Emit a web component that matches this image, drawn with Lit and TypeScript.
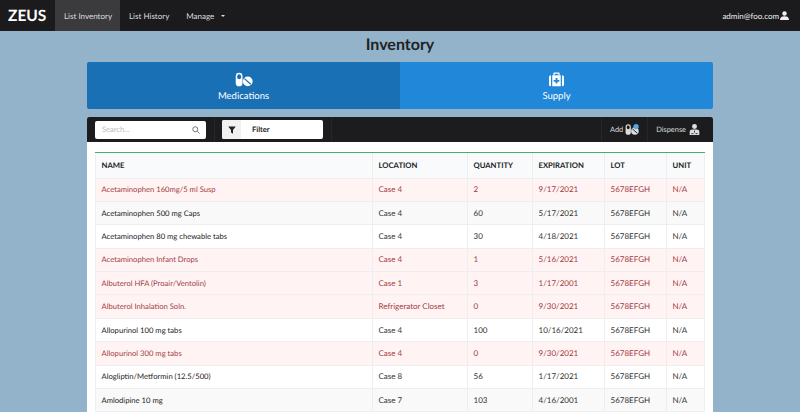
import { LitElement, css, html, svg } from 'lit'
import { customElement } from 'lit/decorators.js'
import { classMap } from 'lit/directives/class-map.js'

type Row = [string, string, string, string, boolean]

const ROWS: Row[] = [
  ['Acetaminophen 160mg/5 ml Susp', 'Case 4', '2', '9/17/2021', true],
  ['Acetaminophen 500 mg Caps', 'Case 4', '60', '5/17/2021', false],
  ['Acetaminophen 80 mg chewable tabs', 'Case 4', '30', '4/18/2021', false],
  ['Acetaminophen Infant Drops', 'Case 4', '1', '5/16/2021', true],
  ['Albuterol HFA (Proair/Ventolin)', 'Case 1', '3', '1/17/2001', true],
  ['Albuterol Inhalation Soln.', 'Refrigerator Closet', '0', '9/30/2021', true],
  ['Allopurinol 100 mg tabs', 'Case 4', '100', '10/16/2021', false],
  ['Allopurinol 300 mg tabs', 'Case 4', '0', '9/30/2021', true],
  ['Alogliptin/Metformin (12.5/500)', 'Case 8', '56', '1/17/2021', false],
  ['Amlodipine 10 mg', 'Case 7', '103', '4/16/2001', false],
]

const pills = svg`
  <rect x="1" y="1" width="9" height="18" rx="4.5" fill="currentColor" />
  <rect x="3" y="3" width="5" height="6.5" rx="2.5" fill="var(--pill-hole)" />
  <circle cx="17" cy="12.5" r="6.5" fill="currentColor" />
  <path d="M12.6 8.8 L21 16.4" stroke="var(--pill-hole)" stroke-width="1.6" />
`

@customElement('app-root')
export class AppRoot extends LitElement {
  protected render() {
    return html`
      <nav class="nav">
        <span class="brand">ZEUS</span>
        <a class="nav-link active">List Inventory</a>
        <a class="nav-link">List History</a>
        <a class="nav-link manage">Manage <span class="caret"></span></a>
        <span class="user">
          admin@foo.com
          <svg width="9" height="9" viewBox="0 0 16 16" fill="currentColor">
            <circle cx="8" cy="4.5" r="4" />
            <path d="M0 16 C0 11 3 9.5 8 9.5 C13 9.5 16 11 16 16 Z" />
          </svg>
        </span>
      </nav>
      <main class="page">
        <h1 class="title">Inventory</h1>
        <div class="tabs">
          <div class="tab tab-meds">
            <svg class="tab-icon" width="20" height="15" viewBox="0 0 24 20">${pills}</svg>
            <span>Medications</span>
          </div>
          <div class="tab tab-supply">
            <svg class="tab-icon" width="17" height="15" viewBox="0 0 20 19" fill="currentColor">
              <path d="M6 4 V2 Q6 0.5 7.5 0.5 H12.5 Q14 0.5 14 2 V4 H12.4 V2.2 H7.6 V4 Z" />
              <path d="M4.6 4 H15.4 V18 H4.6 Z M8.8 7.5 V10 H6.4 V12.2 H8.8 V14.6 H11.2 V12.2 H13.6 V10 H11.2 V7.5 Z" fill-rule="evenodd" />
              <path d="M0.5 6 Q0.5 4 3 4 V18 Q0.5 18 0.5 16 Z M17 4 Q19.5 4 19.5 6 V16 Q19.5 18 17 18 Z" />
            </svg>
            <span>Supply</span>
          </div>
        </div>
        <div class="panel">
          <div class="toolbar">
            <div class="search">
              <span>Search...</span>
              <svg width="8" height="8" viewBox="0 0 16 16" fill="none" stroke="#777" stroke-width="2">
                <circle cx="6.5" cy="6.5" r="5" />
                <path d="M10.5 10.5 L15 15" />
              </svg>
            </div>
            <span class="sep first"></span>
            <div class="filter">
              <span class="filter-icon">
                <svg width="8" height="8" viewBox="0 0 16 16" fill="#222">
                  <path d="M0.5 1 H15.5 L10 8 V15.5 L6 13 V8 Z" />
                </svg>
              </span>
              <span class="filter-label">Filter</span>
            </div>
            <span class="sep"></span>
            <span class="spacer"></span>
            <span class="sep"></span>
            <a class="action add">
              Add
              <svg class="pill-add" width="14" height="13" viewBox="0 0 24 20">${pills}
                <circle cx="19" cy="5" r="4.5" fill="#5aa6e0" />
              </svg>
            </a>
            <span class="sep"></span>
            <a class="action dispense">
              Dispense
              <svg width="11" height="13" viewBox="0 0 16 17" fill="currentColor">
                <circle cx="8" cy="4" r="3.6" />
                <path d="M1 16.5 V12 Q1 8.6 5 8.6 H11 Q15 8.6 15 12 V16.5 Z" />
                <path d="M3.5 14.5 H6.5 M9.5 14.5 H12.5 M8 10 V13" stroke="#1c1c1e" stroke-width="1.2" fill="none" />
              </svg>
            </a>
          </div>
          <div class="sheet">
            <table>
              <thead>
                <tr>
                  <th class="c-name">NAME</th>
                  <th class="c-loc">LOCATION</th>
                  <th class="c-qty">QUANTITY</th>
                  <th class="c-exp">EXPIRATION</th>
                  <th class="c-lot">LOT</th>
                  <th>UNIT</th>
                </tr>
              </thead>
              <tbody>
                ${ROWS.map(
                  ([name, loc, qty, exp, low], i) => html`
                    <tr class=${classMap({ low, stripe: !low && (i === 1 || i === 9) })}>
                      <td class="name">${name}</td>
                      <td>${loc}</td>
                      <td>${qty}</td>
                      <td>${exp}</td>
                      <td>5678EFGH</td>
                      <td>N/A</td>
                    </tr>
                  `,
                )}
              </tbody>
            </table>
          </div>
        </div>
      </main>
    `
  }

  static styles = css`
    :host {
      display: block;
      height: 412px;
      overflow: hidden;
      background: #93b3cb;
      font-family: Lato, 'Open Sans', sans-serif;
      font-size: 8px;
      color: #222;
      text-rendering: geometricPrecision;
    }

    .nav {
      display: flex;
      align-items: stretch;
      height: 31px;
      background: #1b1b1d;
      color: #e6e6e6;
    }

    .brand {
      display: flex;
      align-items: center;
      box-sizing: border-box;
      width: 55px;
      padding-left: 8px;
      font-size: 15.5px;
      font-weight: 700;
      color: #fff;
    }

    .nav-link {
      display: flex;
      align-items: center;
      padding: 0 9px;
      font-size: 8px;
      color: #ddd;
      white-space: nowrap;
    }

    .nav-link.active {
      width: 65px;
      box-sizing: border-box;
      background: #3b3b3d;
    }

    .nav-link.manage {
      padding-left: 8px;
    }

    .caret {
      display: inline-block;
      margin-left: 7px;
      border: 2.5px solid transparent;
      border-top-color: #ddd;
      border-bottom: 0;
    }

    .user {
      display: flex;
      align-items: center;
      gap: 1px;
      margin-left: auto;
      padding-right: 11px;
      font-size: 8px;
      color: #eee;
    }

    .page {
      padding: 0 87px;
    }

    .title {
      margin: 0;
      height: 31px;
      line-height: 27px;
      text-align: center;
      font-size: 16px;
      font-weight: 700;
      color: #222;
    }

    .tabs {
      display: flex;
      height: 47px;
      border-radius: 2px;
      overflow: hidden;
      color: #fff;
      font-size: 9.5px;
    }

    .tab {
      flex: 1;
      display: flex;
      flex-direction: column;
      align-items: center;
      padding-top: 10px;
      gap: 4px;
    }

    .tab-meds {
      background: #1a70b5;
      --pill-hole: #1a70b5;
    }

    .tab-supply {
      background: #2187d8;
    }

    .panel {
      margin-top: 8px;
      background: #fff;
      border-radius: 2px;
      height: 300px;
    }

    .toolbar {
      display: flex;
      align-items: center;
      height: 25px;
      padding-left: 8px;
      background: #1c1c1e;
      border-radius: 2px 2px 0 0;
      color: #ddd;
      --pill-hole: #1c1c1e;
    }

    .search {
      display: flex;
      align-items: center;
      justify-content: space-between;
      box-sizing: border-box;
      width: 111px;
      height: 18px;
      padding: 0 6px 0 7px;
      background: #fff;
      border-radius: 2px;
      color: #bbb;
      font-size: 7.5px;
    }

    .sep {
      align-self: stretch;
      width: 1px;
      margin: 0 8px;
      background: #262628;
    }

    .sep.first {
      margin: 0 7px 0 8px;
    }

    .filter {
      display: flex;
      align-items: stretch;
      width: 101px;
      height: 19px;
      background: #fff;
      border-radius: 2px;
      overflow: hidden;
      color: #222;
    }

    .filter-icon {
      display: flex;
      align-items: center;
      justify-content: center;
      width: 19px;
      background: #f1f1f1;
    }

    .filter-label {
      display: flex;
      align-items: center;
      margin-left: 11px;
      font-size: 7.5px;
      font-weight: 700;
    }

    .spacer {
      flex: 1;
    }

    .action {
      display: flex;
      align-items: center;
      gap: 2px;
      font-size: 7.4px;
      color: #ddd;
    }

    .dispense {
      margin-right: 13px;
      gap: 3px;
    }

    .sheet {
      margin: 10px 8px 0;
      border-top: 1px solid #45b35c;
    }

    table {
      width: 610px;
      table-layout: fixed;
      border-collapse: collapse;
    }

    th,
    td {
      box-sizing: border-box;
      padding: 0 5.5px;
      text-align: left;
      border: 1px solid #eeeeee;
      border-top-width: 0;
      white-space: nowrap;
      overflow: hidden;
    }

    th {
      height: 25px;
      background: #f9fafb;
      font-size: 7.7px;
      font-weight: 700;
      color: #222;
    }

    td {
      height: 23.4px;
      padding-bottom: 1px;
      font-size: 8px;
      color: #333;
    }

    td.name {
      font-size: 7.65px;
      color: #222;
    }

    .c-name {
      width: 277px;
    }

    .c-loc {
      width: 95px;
    }

    .c-qty {
      width: 65px;
    }

    .c-exp {
      width: 72px;
    }

    .c-lot {
      width: 62px;
    }

    .low td {
      background: #fff4f3;
      color: #a33a3f;
    }

    .stripe td {
      background: #f9f9f9;
    }
  `
}

declare global {
  interface HTMLElementTagNameMap {
    'app-root': AppRoot
  }
}
